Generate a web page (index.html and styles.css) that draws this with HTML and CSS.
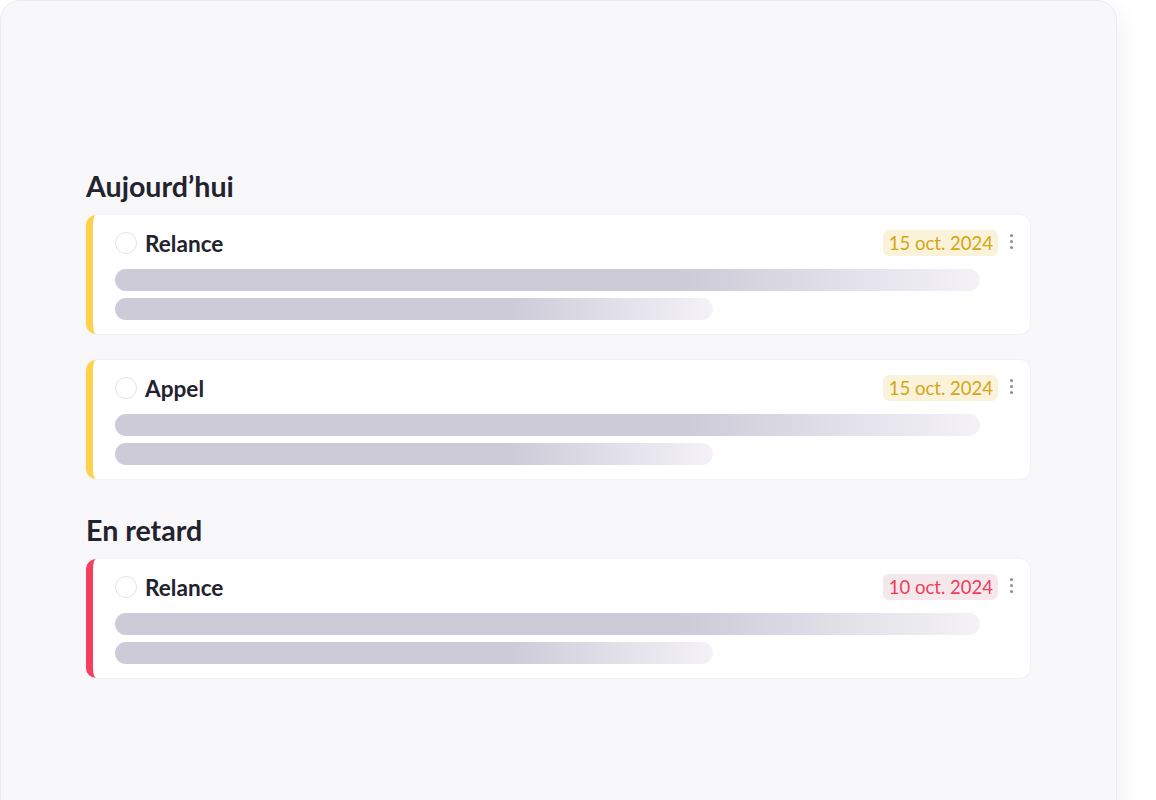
FILE: index.html
```html
<!DOCTYPE html>
<html lang="fr">
<head>
<meta charset="utf-8">
<title>Tâches</title>
<link rel="stylesheet" href="styles.css">
</head>
<body>
<div class="panel">
  <section class="group">
    <h2 class="group-title">Aujourd’hui</h2>
    <div class="card card--today">
      <div class="card-head">
        <span class="check"></span>
        <span class="card-title">Relance</span>
        <span class="badge badge--today">15 oct. 2024</span>
        <span class="kebab"><i></i><i></i><i></i></span>
      </div>
      <div class="bar bar--long"></div>
      <div class="bar bar--short"></div>
    </div>
    <div class="card card--today">
      <div class="card-head">
        <span class="check"></span>
        <span class="card-title">Appel</span>
        <span class="badge badge--today">15 oct. 2024</span>
        <span class="kebab"><i></i><i></i><i></i></span>
      </div>
      <div class="bar bar--long"></div>
      <div class="bar bar--short"></div>
    </div>
  </section>
  <section class="group">
    <h2 class="group-title">En retard</h2>
    <div class="card card--late">
      <div class="card-head">
        <span class="check"></span>
        <span class="card-title">Relance</span>
        <span class="badge badge--late">10 oct. 2024</span>
        <span class="kebab"><i></i><i></i><i></i></span>
      </div>
      <div class="bar bar--long"></div>
      <div class="bar bar--short"></div>
    </div>
  </section>
</div>
</body>
</html>
```
FILE: styles.css
```css
* { box-sizing: border-box; }
html, body { margin: 0; padding: 0; }
body {
  background: #ffffff;
  font-family: Lato, "Noto Sans", sans-serif;
  color: #23222f;
  width: 1156px;
  height: 800px;
  overflow: hidden;
}
.panel {
  width: 1117px;
  height: 830px;
  background: #f8f8fa;
  border: 1px solid #ebebef;
  border-radius: 20px 20px 0 0;
  box-shadow: 6px 8px 22px rgba(40, 40, 70, 0.05);
  padding: 169px 86px 0 85px;
  display: flex;
  flex-direction: column;
  gap: 35px;
}
.group {
  display: flex;
  flex-direction: column;
  gap: 26px;
}
.group-title {
  margin: 0 0 -13px 0;
  font-size: 28.6px;
  line-height: 32px;
  font-weight: 700;
  color: #23222f;
}
.card {
  background: #ffffff;
  border-radius: 10px;
  border-left: 7px solid transparent;
  padding: 15px 15px 14px 22px;
  display: flex;
  flex-direction: column;
  gap: 7px;
  box-shadow: 0 0 0 1px #f3f3f6;
}
.card--today { border-left-color: #fdd24a; }
.card--late { border-left-color: #f43f5e; }
.card-head {
  display: flex;
  align-items: center;
  height: 26px;
  margin-bottom: 6px;
}
.check {
  width: 22px;
  height: 22px;
  border-radius: 50%;
  border: 1.5px solid #e5e2ea;
  flex: none;
}
.card-title {
  margin-left: 8px;
  font-size: 22.6px;
  font-weight: 700;
  color: #23222f;
  flex: 1;
}
.badge {
  height: 26px;
  line-height: 26px;
  padding: 0 5px 0 6px;
  border-radius: 6px;
  font-size: 18.5px;
  font-weight: 400;
}
.badge--today { background: #faf2d9; color: #d4a516; }
.badge--late { background: #f5e8ed; color: #ee3d5b; }
.kebab {
  width: 8px;
  margin-left: 9px;
  display: flex;
  flex-direction: column;
  align-items: center;
  gap: 3px;
  margin-top: -4px;
}
.kebab i {
  width: 3px;
  height: 3px;
  border-radius: 50%;
  background: #8c8a98;
}
.bar {
  height: 22px;
  border-radius: 11px;
  background: linear-gradient(90deg, #cdcbd8 0%, #cdcbd8 66%, #f4f2f7 100%);
}
.bar--long { width: 865px; }
.bar--short { width: 598px; }
```
